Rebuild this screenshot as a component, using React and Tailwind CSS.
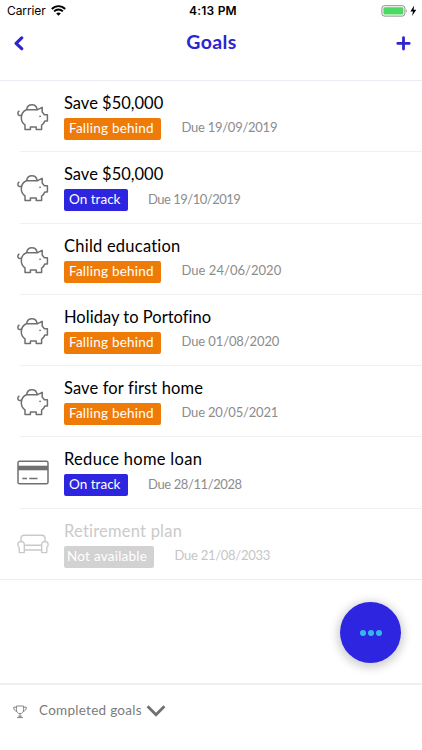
function Piggy() {
  return (
    <svg width="32" height="30" viewBox="0 0 32 30" fill="none" stroke="#707070" strokeWidth="1.5" strokeLinejoin="round" strokeLinecap="round">
      <path d="M9.6 7.6A5.4 6 0 0 1 20.2 7.6" />
      <path d="M9.3 7.7H20.6L25.2 5.4V10.1L27.4 12.7H30.4V19.1H27.8C27 21.1 26 22.3 24.6 23.1V27.6H19.2V24.9H13.4V27.6H8V22.9C5.6 21.3 4.3 18.5 4.3 15.7C4.3 12.1 6.3 9.1 9.3 7.7Z" />
      <path d="M2 9.2C.4 10.3.5 12.8 2.1 13.4C2.9 13.7 3.8 13.5 4.4 13" />
      <circle cx="23" cy="14.3" r=".6" fill="#707070" strokeWidth=".5" />
    </svg>
  );
}

function Card() {
  return (
    <svg width="32" height="30" viewBox="0 0 32 30" fill="none" stroke="#707070" strokeWidth="1.5">
      <rect x="1" y="3.2" width="30" height="22.6" rx="1.6" />
      <path d="M1 10H31" strokeWidth="4.6" />
      <path d="M5.3 20.5H10M12.3 20.5H20.5" />
    </svg>
  );
}

function Sofa() {
  return (
    <svg width="32" height="30" viewBox="0 0 32 30" fill="none" stroke="#c9c9c9" strokeWidth="1.4" strokeLinejoin="round">
      <path d="M4 11.4V8.5C4 6.4 5.2 5.3 7.2 5.3H24.8C26.8 5.3 28 6.4 28 8.5V11.4" />
      <path d="M7.3 15.2H24.7M7.3 20H24.7" />
      <path d="M2.2 22.6V17.2C.2 15.8.3 11.5 4 11.5C6.4 11.5 7.3 13 7.3 14.6V22.6ZM29.8 22.6V17.2C31.8 15.8 31.7 11.5 28 11.5C25.6 11.5 24.7 13 24.7 14.6V22.6Z" />
    </svg>
  );
}

const behind = { label: "Falling behind", badge: "w-[97px] bg-[#ee7b08] text-white", text: "tracking-[0.24px]" };
const track = { label: "On track", badge: "w-[63.5px] bg-[#2d25e0] text-white", text: "tracking-[0.02px]" };
const none = { label: "Not available", badge: "w-[90px] bg-[#d2d2d2] text-white", text: "tracking-[0.24px] -ml-[2px]" };

const goals = [
  { icon: Piggy, title: "Save $50,000", spacing: "tracking-[0px]", status: behind, due: "19/09/2019", dueSpacing: "tracking-[-0.26px]" },
  { icon: Piggy, title: "Save $50,000", spacing: "tracking-[0px]", status: track, due: "19/10/2019", dueSpacing: "tracking-[-0.5px]" },
  { icon: Piggy, title: "Child education", spacing: "tracking-[0.23px]", status: behind, due: "24/06/2020", dueSpacing: "tracking-[0.03px]" },
  { icon: Piggy, title: "Holiday to Portofino", spacing: "tracking-[0.02px]", status: behind, due: "01/08/2020", dueSpacing: "tracking-[-0.11px]" },
  { icon: Piggy, title: "Save for first home", spacing: "tracking-[0.13px]", status: behind, due: "20/05/2021", dueSpacing: "tracking-[-0.19px]" },
  { icon: Card, title: "Reduce home loan", spacing: "tracking-[0.3px]", status: track, due: "28/11/2028", dueSpacing: "tracking-[-0.4px]" },
  { icon: Sofa, title: "Retirement plan", spacing: "tracking-[0.22px]", status: none, due: "21/08/2033", dueSpacing: "tracking-[-0.27px]", muted: true },
];

function GoalRow({ goal }) {
  const Icon = goal.icon;
  return (
    <div className="flex h-[71.3px] pl-[17px]">
      <div className="w-[47px] shrink-0 pt-[21px]"><Icon /></div>
      <div className="min-w-0 flex-1 pt-[11px]">
        <div className={`h-[22px] whitespace-nowrap text-[16.5px] leading-[22px] ${goal.spacing} ${goal.muted ? "text-[#cacaca]" : "text-black"}`}>{goal.title}</div>
        <div className="mt-[4px] flex h-[22px] items-center">
          <div className={`flex h-[22px] shrink-0 items-center rounded-[2px] pl-[5px] text-[13.5px] leading-[20px] ${goal.status.badge}`}>
            <span className={`-mt-[2px] whitespace-nowrap ${goal.status.text}`}>{goal.status.label}</span>
          </div>
          <div className={`-mt-[2px] ml-[20.5px] whitespace-nowrap text-[13px] ${goal.dueSpacing} ${goal.muted ? "text-[#c6c6c6]" : "text-[#8c8c8c]"}`}>Due {goal.due}</div>
        </div>
      </div>
    </div>
  );
}

export default function App() {
  return (
    <div className="relative flex h-[750px] w-[422px] flex-col overflow-hidden bg-white font-[Lato,sans-serif]">
      <div className="grid h-[22px] grid-cols-3 items-center font-[Inter,sans-serif] text-black">
        <div className="flex items-center gap-[6px] pl-[7px]">
          <span className="text-[12px] tracking-[-0.1px]">Carrier</span>
          <svg className="-ml-px -mt-px" width="15" height="11" viewBox="0 0 15 11" fill="none" stroke="#000" strokeWidth="1.9">
            <path d="M.8 4C4.6.1 10.4.1 14.2 4M3.1 6.4C5.7 3.8 9.3 3.8 11.9 6.4" />
            <path d="M5.2 8.4Q7.5 6.4 9.8 8.4L7.5 10.7Z" fill="#000" stroke="none" />
          </svg>
        </div>
        <div className="pl-[4px] text-center text-[12px] font-semibold tracking-[0.2px]">4:13 PM</div>
        <div className="flex items-center justify-end pr-[4px]">
          <svg width="37" height="12" viewBox="0 0 37 12">
            <rect x=".9" y=".7" width="23" height="10.4" rx="2.6" fill="#fff" stroke="#8e8e8e" />
            <rect x="2.4" y="2.2" width="20" height="7.4" rx="1.3" fill="#4cd964" />
            <path d="M25.3 4Q27 5.9 25.3 7.8Z" fill="#8e8e8e" />
            <path d="M33.2 .5L29.4 6.5H32L31 11L35.3 4.8H32.6Z" />
          </svg>
        </div>
      </div>

      <div className="flex h-[58px] items-start justify-between text-[#2d25d0]">
        <svg className="ml-[13px] mt-[14px]" width="12" height="15" viewBox="0 0 12 15" fill="none" stroke="currentColor" strokeWidth="3.2">
          <path d="M8.7 1.9L3.1 7.3L8.7 12.7" strokeLinecap="round" strokeLinejoin="round" />
        </svg>
        <h1 className="ml-[2px] mt-[7px] text-[19.5px] font-bold leading-[26px] tracking-[0.35px]">Goals</h1>
        <svg className="mr-[11px] mt-[14px]" width="15" height="15" viewBox="0 0 15 15" stroke="currentColor" strokeWidth="2.8" strokeLinecap="round">
          <path d="M7.5 1.7V13.1M1.8 7.4H13.2" />
        </svg>
      </div>

      <div className="h-px bg-[#ececf4]" />
      <div className="h-[499px]">
        {goals.map((goal, i) => (
          <div key={i} className="h-[71.3px]">
            <GoalRow goal={goal} />
            <div className={i === goals.length - 1 ? "-mt-px h-px bg-[#ececf0]" : "-mt-px ml-[20px] h-px bg-[#f0f0f3]"} />
          </div>
        ))}
      </div>

      <div className="mt-auto flex h-[67px] items-start border-t-2 border-[#f0f0f0] text-[#7b7b7b]">
        <svg className="ml-[13px] mt-[20px]" width="14" height="14" viewBox="0 0 14 14" fill="none" stroke="currentColor" strokeWidth=".9">
          <path d="M3.4 1H10.6V4.8C10.6 7 9 8.7 7 8.7S3.4 7 3.4 4.8ZM3.4 2.2H.7C.7 4.5 1.8 6 4 6.3M10.6 2.2H13.3C13.3 4.5 12.2 6 10 6.3M7 8.7V12.4M4 12.6H10M5.2 11.2H8.8" />
        </svg>
        <span className="ml-[12px] mt-[15px] whitespace-nowrap text-[13.5px] leading-[20px] tracking-[0.27px]">Completed goals</span>
        <svg className="ml-[4.5px] mt-[19px]" width="20" height="14" viewBox="0 0 20 14" fill="none" stroke="#707070" strokeWidth="2.8">
          <path d="M1.6 2.2L10 10.7L18.4 2.2" />
        </svg>
      </div>

      <button className="absolute left-[340px] top-[602px] flex h-[61px] w-[61px] items-center justify-center gap-[2px] rounded-full bg-[#2d25e0] shadow-[0_2px_8px_3px_rgba(0,0,0,0.18)]">
        <span className="size-[6px] rounded-full bg-[#35b8ee]" />
        <span className="size-[6px] rounded-full bg-[#35b8ee]" />
        <span className="size-[6px] rounded-full bg-[#35b8ee]" />
      </button>
    </div>
  );
}
